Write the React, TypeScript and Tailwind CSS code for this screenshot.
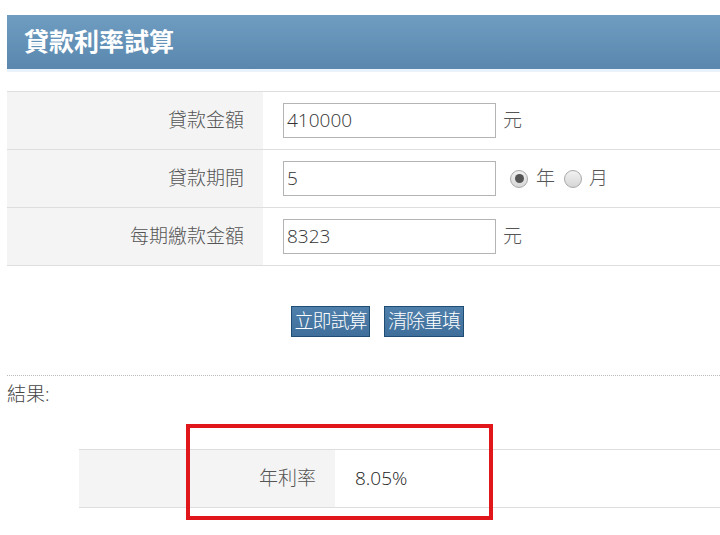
import React from "react";

const font = { fontFamily: '"Open Sans", "Noto Sans CJK TC", sans-serif' };

function Radio({ checked }: { checked: boolean }) {
  return (
    <span className="inline-flex h-[18px] w-[18px] items-center justify-center rounded-full border border-[#a9a9a9] bg-gradient-to-b from-[#f2f2f2] to-[#d6d6d6]">
      {checked && <span className="h-[9px] w-[9px] rounded-full bg-[#555]" />}
    </span>
  );
}

function Row({ label, children }: { label: string; children: React.ReactNode }) {
  return (
    <div className="flex h-[58px] border-b border-[#dedede]">
      <div className="flex w-[256px] items-center justify-end bg-[#f4f4f4] pr-[19px] text-[19px] font-light text-[#555]">
        {label}
      </div>
      <div className="flex items-center pl-[20px]">{children}</div>
    </div>
  );
}

function Input({ value }: { value: string }) {
  return (
    <div className="flex h-[35px] w-[213px] items-center border border-[#b4b4b4] bg-white pl-[3px] text-[19px] font-light text-[#333]">
      {value}
    </div>
  );
}

export default function App() {
  return (
    <div className="relative h-[535px] w-[720px] overflow-hidden bg-white pt-[15px] pl-[7px]" style={font}>
      <div className="flex h-[54px] items-center bg-gradient-to-b from-[#6f9cc1] to-[#5a87ad] pl-[17px] text-[25px] font-bold text-white">
        貸款利率試算
      </div>
      <div className="h-[3px] bg-[#eaf3fb]" />
      <div className="mt-[19px] border-t border-[#dedede]">
        <Row label="貸款金額">
          <Input value="410000" />
          <span className="ml-[7px] text-[19px] font-light text-[#555]">元</span>
        </Row>
        <Row label="貸款期間">
          <Input value="5" />
          <span className="ml-[14px] flex items-center gap-[9px] text-[19px] font-light text-[#555]">
            <span className="flex items-center gap-[8px]">
              <Radio checked />年
            </span>
            <span className="flex items-center gap-[7px]">
              <Radio checked={false} />月
            </span>
          </span>
        </Row>
        <Row label="每期繳款金額">
          <Input value="8323" />
          <span className="ml-[7px] text-[19px] font-light text-[#555]">元</span>
        </Row>
      </div>
      <div className="mt-[40px] flex gap-[14px] pl-[284px]">
        <button className="h-[31px] w-[79px] border border-[#1f4d73] bg-gradient-to-b from-[#4f80ab] to-[#3f6f9a] text-[19px] font-light leading-none tracking-[-1px] text-white">
          立即試算
        </button>
        <button className="h-[31px] w-[80px] border border-[#1f4d73] bg-gradient-to-b from-[#4f80ab] to-[#3f6f9a] text-[19px] font-light leading-none tracking-[-1px] text-white">
          清除重填
        </button>
      </div>
      <div className="mt-[38px] border-t border-dotted border-[#bbb]" />
      <div className="mt-[5px] text-[19px] font-light leading-[26px] text-[#444]">結果:</div>
      <div className="ml-[72px] mt-[42px] flex h-[59px] border-y border-[#dedede]">
        <div className="flex w-[256px] items-center justify-end bg-[#f4f4f4] pr-[19px] text-[19px] font-light text-[#555]">
          年利率
        </div>
        <div className="flex items-center pl-[20px] text-[19px] font-light text-[#222]">8.05%</div>
      </div>
      <div className="absolute left-[186px] top-[424px] h-[96px] w-[307px] border-[4px] border-[#e0161a]" />
    </div>
  );
}
